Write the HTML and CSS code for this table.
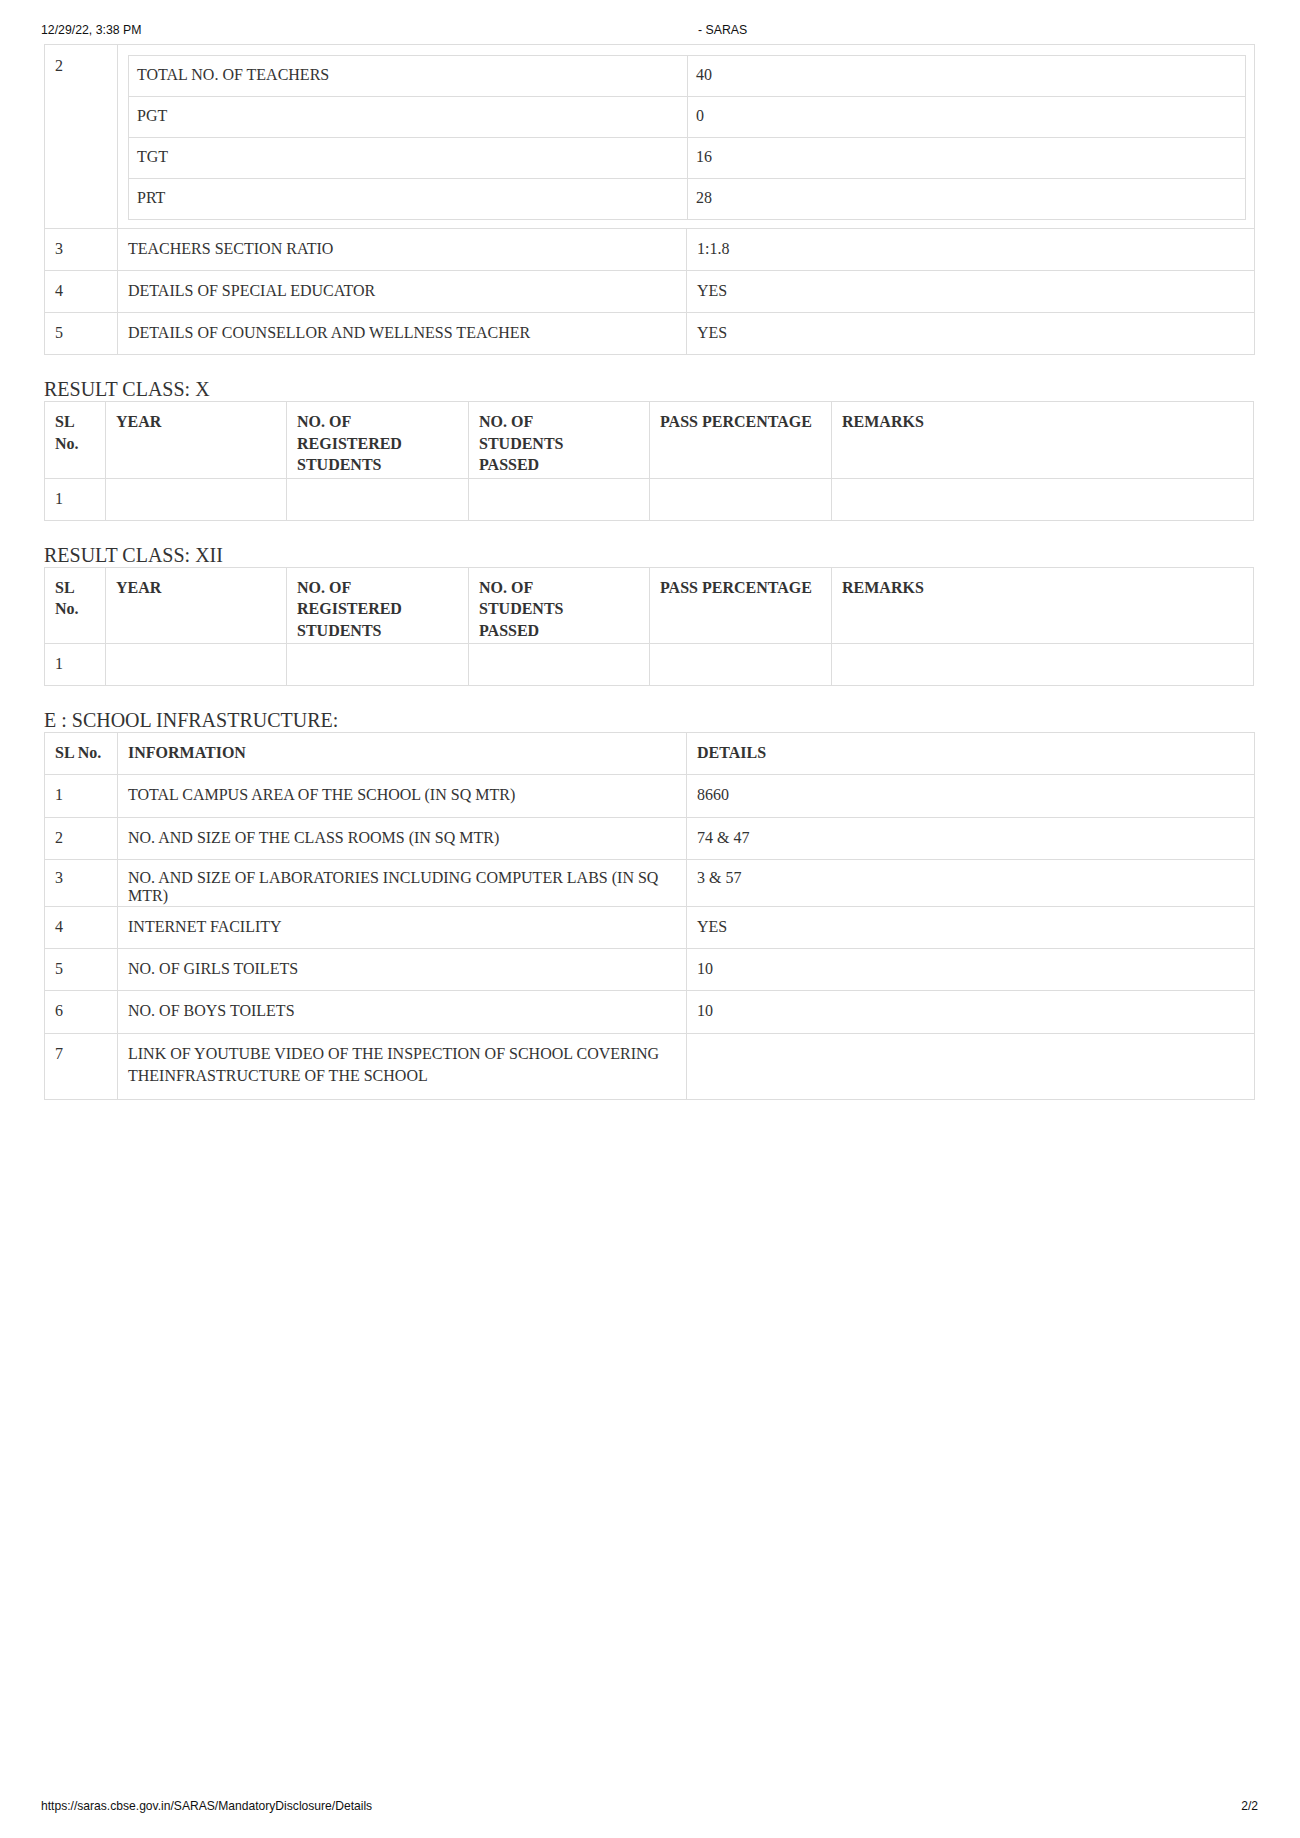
FILE: index.html
```html
<!DOCTYPE html>
<html lang="en">
<head>
<meta charset="utf-8">
<title>- SARAS</title>
<link rel="stylesheet" href="styles.css">
</head>
<body>
<div class="page">
  <header class="print-head">
    <span>12/29/22, 3:38 PM</span>
    <span>- SARAS</span>
  </header>

  <main class="content">
    <table class="grid">
      <colgroup><col class="w73"><col class="w569"><col class="w568"></colgroup>
      <tbody>
        <tr class="nest-row">
          <td>2</td>
          <td colspan="2" class="nest-cell">
            <table class="grid nested">
              <colgroup><col class="w559"><col class="w558"></colgroup>
              <tbody>
                <tr><td>TOTAL NO. OF TEACHERS</td><td>40</td></tr>
                <tr><td>PGT</td><td>0</td></tr>
                <tr><td>TGT</td><td>16</td></tr>
                <tr><td>PRT</td><td>28</td></tr>
              </tbody>
            </table>
          </td>
        </tr>
        <tr><td>3</td><td>TEACHERS SECTION RATIO</td><td>1:1.8</td></tr>
        <tr><td>4</td><td>DETAILS OF SPECIAL EDUCATOR</td><td>YES</td></tr>
        <tr><td>5</td><td>DETAILS OF COUNSELLOR AND WELLNESS TEACHER</td><td>YES</td></tr>
      </tbody>
    </table>

    <h3 class="section-title">RESULT CLASS: X</h3>
    <table class="grid result">
      <colgroup><col class="w61"><col class="w181"><col class="w182"><col class="w181"><col class="w182"><col></colgroup>
      <thead>
        <tr><th>SL No.</th><th>YEAR</th><th>NO. OF REGISTERED STUDENTS</th><th>NO. OF<br>STUDENTS<br>PASSED</th><th>PASS PERCENTAGE</th><th>REMARKS</th></tr>
      </thead>
      <tbody>
        <tr><td>1</td><td></td><td></td><td></td><td></td><td></td></tr>
      </tbody>
    </table>

    <h3 class="section-title">RESULT CLASS: XII</h3>
    <table class="grid result">
      <colgroup><col class="w61"><col class="w181"><col class="w182"><col class="w181"><col class="w182"><col></colgroup>
      <thead>
        <tr><th>SL No.</th><th>YEAR</th><th>NO. OF REGISTERED STUDENTS</th><th>NO. OF<br>STUDENTS<br>PASSED</th><th>PASS PERCENTAGE</th><th>REMARKS</th></tr>
      </thead>
      <tbody>
        <tr><td>1</td><td></td><td></td><td></td><td></td><td></td></tr>
      </tbody>
    </table>

    <h3 class="section-title">E : SCHOOL INFRASTRUCTURE:</h3>
    <table class="grid infra">
      <colgroup><col class="w73"><col class="w569"><col class="w568"></colgroup>
      <thead>
        <tr><th>SL No.</th><th>INFORMATION</th><th>DETAILS</th></tr>
      </thead>
      <tbody>
        <tr><td>1</td><td>TOTAL CAMPUS AREA OF THE SCHOOL (IN SQ MTR)</td><td>8660</td></tr>
        <tr><td>2</td><td>NO. AND SIZE OF THE CLASS ROOMS (IN SQ MTR)</td><td>74 &amp; 47</td></tr>
        <tr class="tight-row"><td>3</td><td>NO. AND SIZE OF LABORATORIES INCLUDING COMPUTER LABS (IN SQ MTR)</td><td>3 &amp; 57</td></tr>
        <tr><td>4</td><td>INTERNET FACILITY</td><td>YES</td></tr>
        <tr><td>5</td><td>NO. OF GIRLS TOILETS</td><td>10</td></tr>
        <tr><td>6</td><td>NO. OF BOYS TOILETS</td><td>10</td></tr>
        <tr class="tall-row"><td>7</td><td>LINK OF YOUTUBE VIDEO OF THE INSPECTION OF SCHOOL COVERING THEINFRASTRUCTURE OF THE SCHOOL</td><td></td></tr>
      </tbody>
    </table>
  </main>

  <footer class="print-foot">
    <span>https://saras.cbse.gov.in/SARAS/MandatoryDisclosure/Details</span>
    <span>2/2</span>
  </footer>
</div>
</body>
</html>
```

FILE: styles.css
```css
html, body {
  margin: 0;
  padding: 0;
  background: #fff;
}

.page {
  min-height: 1838px;
  display: flex;
  flex-direction: column;
  box-sizing: border-box;
}

.print-head {
  display: grid;
  grid-template-columns: 657px auto;
  padding: 23px 0 0 41px;
  font-family: "Liberation Sans", Arial, sans-serif;
  font-size: 12.3px;
  line-height: 14px;
  color: #111;
  height: 21px;
}

.content {
  padding: 0 46px 0 44px;
  font-family: "Liberation Serif", "Times New Roman", serif;
  font-size: 16px;
  color: #333;
}

.grid {
  width: 100%;
  border-collapse: collapse;
  table-layout: fixed;
  margin-bottom: 22px;
}

.grid td,
.grid th {
  border: 1px solid #ddd;
  padding: 9px 10px 11px 10px;
  line-height: 21px;
  text-align: left;
  vertical-align: top;
  font-size: 16px;
  color: #333;
}

.grid th {
  font-weight: bold;
}

.infra td,
.infra th {
  line-height: 21.3px;
}

.w73 { width: 73px; }
.w569 { width: 569px; }
.w568 { width: 568px; }
.w559 { width: 559px; }
.w558 { width: 558px; }
.w61 { width: 61px; }
.w181 { width: 181px; }
.w182 { width: 182px; }

.nest-row > td {
  padding-top: 10px;
  padding-bottom: 8px;
}

.nested {
  margin-bottom: 0;
}

.nested td {
  line-height: 20px;
  padding-left: 8px;
}

.result thead th {
  line-height: 21.5px;
  padding-bottom: 2px;
}

.infra .tight-row td {
  line-height: 18px;
  padding-bottom: 1px;
}

.infra .tall-row td {
  line-height: 22px;
  padding-bottom: 12px;
}

.section-title {
  margin: 0;
  font-size: 20px;
  line-height: 24px;
  font-weight: normal;
  color: #333;
}

.print-foot {
  margin-top: auto;
  display: flex;
  justify-content: space-between;
  padding: 0 42px 25px 41px;
  font-family: "Liberation Sans", Arial, sans-serif;
  font-size: 12.1px;
  line-height: 14px;
  color: #111;
}
```
